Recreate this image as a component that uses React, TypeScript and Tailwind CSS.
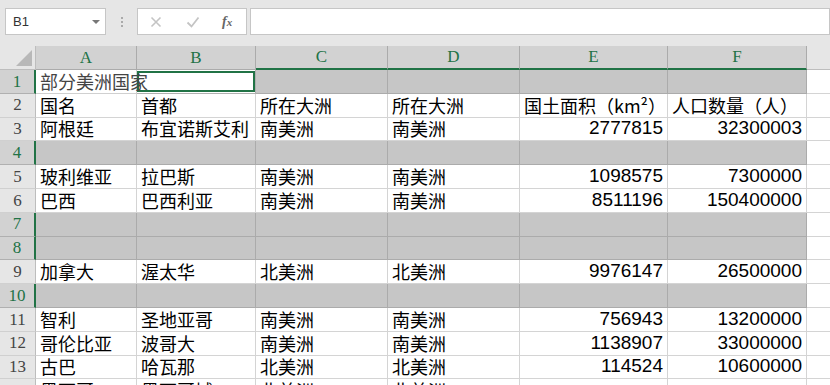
const cols = ["A", "B", "C", "D", "E", "F"];
const widths = ["w-[101px]", "w-[119px]", "w-[132px]", "w-[132px]", "w-[148px]", "w-[139px]"];

type Row = { n: number; cells?: string[]; gray?: boolean };

const rows: Row[] = [
  { n: 1, gray: true },
  { n: 2, cells: ["国名", "首都", "所在大洲", "所在大洲", "国土面积（km²）", "人口数量（人）"] },
  { n: 3, cells: ["阿根廷", "布宜诺斯艾利", "南美洲", "南美洲", "2777815", "32300003"] },
  { n: 4, gray: true },
  { n: 5, cells: ["玻利维亚", "拉巴斯", "南美洲", "南美洲", "1098575", "7300000"] },
  { n: 6, cells: ["巴西", "巴西利亚", "南美洲", "南美洲", "8511196", "150400000"] },
  { n: 7, gray: true },
  { n: 8, gray: true },
  { n: 9, cells: ["加拿大", "渥太华", "北美洲", "北美洲", "9976147", "26500000"] },
  { n: 10, gray: true },
  { n: 11, cells: ["智利", "圣地亚哥", "南美洲", "南美洲", "756943", "13200000"] },
  { n: 12, cells: ["哥伦比亚", "波哥大", "南美洲", "南美洲", "1138907", "33000000"] },
  { n: 13, cells: ["古巴", "哈瓦那", "北美洲", "北美洲", "114524", "10600000"] },
  { n: 14, cells: ["墨西哥", "墨西哥城", "北美洲", "北美洲", "", ""] },
];

const cjk = "font-['Noto_Sans_CJK_SC',sans-serif]";
const num = "font-['Liberation_Sans',Arial,sans-serif]";

const Toolbar = () => (
  <div className="flex h-[46px] items-start bg-[#e6e6e6] pt-[8px]">
    {/* name box */}
    <div className="ml-[5px] flex h-[27px] w-[101px] items-center justify-between border border-[#c6c6c6] bg-white pl-[7px] pr-[4px]">
      <span className="font-['Liberation_Sans',sans-serif] text-[13px] text-[#333]">B1</span>
      <svg width="10" height="6" viewBox="0 0 10 6">
        <path d="M1 1h8L5 5z" fill="#777" />
      </svg>
    </div>
    <div className="flex h-[27px] w-[31px] flex-col items-center justify-center gap-[2px]">
      <span className="h-[2px] w-[2px] bg-[#aaa]" />
      <span className="h-[2px] w-[2px] bg-[#aaa]" />
      <span className="h-[2px] w-[2px] bg-[#aaa]" />
    </div>
    {/* cancel / enter / fx */}
    <div className="flex h-[27px] w-[110px] items-center border border-[#c6c6c6] bg-white">
      <svg className="ml-[12px]" width="12" height="12" viewBox="0 0 12 12">
        <path d="M1.5 1.5l9 9M10.5 1.5l-9 9" stroke="#c4c4c4" strokeWidth="1.6" />
      </svg>
      <svg className="ml-[24px]" width="14" height="12" viewBox="0 0 14 12">
        <path d="M1.5 6.5l4 4 7-9" stroke="#c4c4c4" strokeWidth="1.8" fill="none" />
      </svg>
      <span className="ml-[22px] font-['Liberation_Serif',serif] text-[14px] italic font-bold text-[#666]">
        f<span className="text-[11px]">x</span>
      </span>
    </div>
    <div className="ml-[3px] h-[27px] flex-1 border border-[#c6c6c6] bg-white" />
  </div>
);

const ColumnHeader = () => (
  <div className="flex h-[24px]">
    <div className="relative w-[36px] border-r border-b border-[#bdbdbd] bg-[#e6e6e6]">
      <svg className="absolute right-[3px] bottom-[3px]" width="16" height="16" viewBox="0 0 16 16">
        <path d="M16 0V16H0z" fill="#b8b8b8" />
      </svg>
    </div>
    {cols.map((c, i) => (
      <div
        key={c}
        className={`${widths[i]} flex items-center justify-center border-r border-[#ababab] bg-[#d2d2d2] font-['Liberation_Serif',serif] text-[17px] text-[#217346] ${
          i >= 2 ? "border-b-2 border-b-[#217346]" : "border-b border-b-[#ababab]"
        }`}
      >
        {c}
      </div>
    ))}
    <div className="flex-1 border-b border-[#bdbdbd] bg-[#e6e6e6]" />
  </div>
);

const SheetRow = ({ row }: { row: Row }) => (
  <div className="flex h-[23.8px]">
    <div
      className={`flex w-[36px] items-center justify-center border-b font-['Liberation_Serif',serif] text-[17px] ${
        row.gray
          ? "border-r-2 border-r-[#217346] border-b-[#b0b0b0] bg-[#d2d2d2] text-[#217346]"
          : "border-r border-r-[#bdbdbd] border-b-[#d0d0d0] bg-[#e6e6e6] text-[#444]"
      }`}
    >
      {row.n}
    </div>
    {cols.map((c, i) => {
      const isNum = i >= 4 && row.n > 2;
      if (row.n === 1 && i === 0) {
        // title text spills over into B1
        return (
          <div
            key={c}
            className={`${widths[i]} relative z-10 flex items-end whitespace-nowrap border-r border-b border-[#d0d0d0] bg-white pl-[4px] pb-[1px] ${cjk} text-[18px] leading-[22px] text-[#444]`}
          >
            部分美洲国家
          </div>
        );
      }
      if (row.n === 1 && i === 1) {
        return (
          <div key={c} className={`${widths[i]} relative border-r border-b border-[#b0b0b0] bg-white`}>
            <div className="absolute top-[1px] left-0 right-0 bottom-[1px] border-2 border-[#217346]" />
          </div>
        );
      }
      if (row.gray) {
        return <div key={c} className={`${widths[i]} border-r border-b border-[#ababab] bg-[#c6c6c6]`} />;
      }
      return (
        <div
          key={c}
          className={`${widths[i]} flex items-end whitespace-nowrap border-r border-b border-[#d4d4d4] bg-white pb-[1px] ${
            isNum
              ? `${num} justify-end pr-[4px] text-[19px] leading-[22px] text-black`
              : `${cjk} pl-[4px] text-[18px] leading-[22px] text-black`
          }`}
        >
          {row.cells?.[i]}
        </div>
      );
    })}
    <div className="flex-1 border-b border-[#d4d4d4] bg-white" />
  </div>
);

export default function App() {
  return (
    <div className="h-[385px] w-[830px] overflow-hidden bg-white">
      <Toolbar />
      <ColumnHeader />
      {rows.map((r) => (
        <SheetRow key={r.n} row={r} />
      ))}
    </div>
  );
}
